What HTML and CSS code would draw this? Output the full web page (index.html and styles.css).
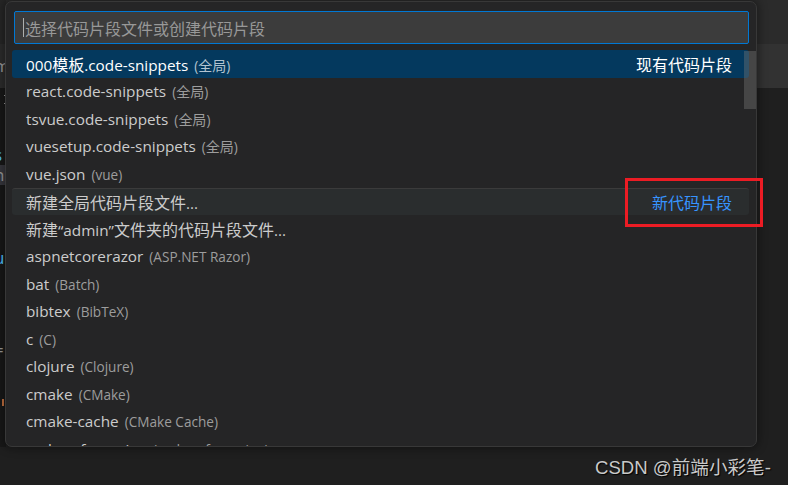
FILE: index.html
```html
<!DOCTYPE html>
<html lang="zh-CN">
<head>
<meta charset="utf-8">
<title>选择代码片段</title>
<link rel="stylesheet" href="styles.css">
</head>
<body>
<div class="workbench">
  <div class="main-area">
    <aside class="sidebar">
      <div class="sb-title"></div>
      <div class="sb-head"><span class="peek grey">m</span></div>
      <div class="sb-body">
        <div class="sb-line dots"><span class="dot"></span><span class="dot"></span></div>
        <div class="sb-line l-s"><span class="peek blue">s</span></div>
        <div class="sb-line l-n"><span class="peek grey">n</span></div>
        <div class="sb-line l-u"><span class="peek blue">u</span></div>
        <div class="sb-line l-eq"><span class="peek grey">=</span></div>
        <div class="sb-line l-or"><span class="orange-bar"></span></div>
      </div>
    </aside>
    <main class="editor">
      <div class="titlebar"></div>
      <div class="tabs"></div>
      <div class="editor-body"></div>
    </main>
  </div>
  <div class="bottom-area"></div>
</div>

<div class="quick-input">
  <div class="qi-header">
    <div class="qi-box"><span class="caret"></span><span class="placeholder">选择代码片段文件或创建代码片段</span></div>
  </div>
  <div class="qi-list">
    <div class="row selected"><span class="label">000<span class="zh">模板</span>.code-snippets<span class="desc">(<span class="zh">全局</span>)</span></span><span class="group zh">现有代码片段</span></div>
    <div class="row"><span class="label">react.code-snippets<span class="desc">(<span class="zh">全局</span>)</span></span></div>
    <div class="row"><span class="label">tsvue.code-snippets<span class="desc">(<span class="zh">全局</span>)</span></span></div>
    <div class="row"><span class="label">vuesetup.code-snippets<span class="desc">(<span class="zh">全局</span>)</span></span></div>
    <div class="row"><span class="label">vue.json<span class="desc">(vue)</span></span></div>
    <div class="row hover separator"><span class="label"><span class="zh">新建全局代码片段文件</span>...</span><span class="group new zh">新代码片段</span></div>
    <div class="row"><span class="label"><span class="zh">新建</span>“admin”<span class="zh">文件夹的代码片段文件</span>...</span></div>
    <div class="row"><span class="label">aspnetcorerazor<span class="desc">(ASP.NET Razor)</span></span></div>
    <div class="row"><span class="label">bat<span class="desc">(Batch)</span></span></div>
    <div class="row"><span class="label">bibtex<span class="desc">(BibTeX)</span></span></div>
    <div class="row"><span class="label">c<span class="desc">(C)</span></span></div>
    <div class="row"><span class="label">clojure<span class="desc">(Clojure)</span></span></div>
    <div class="row"><span class="label">cmake<span class="desc">(CMake)</span></span></div>
    <div class="row"><span class="label">cmake-cache<span class="desc">(CMake Cache)</span></span></div>
    <div class="row"><span class="label">code-referencing<span class="desc">(code-referencing)</span></span></div>
  </div>
  <div class="scrollbar"></div>
</div>

<div class="annotation"></div>
<div class="watermark">CSDN @前端小彩笔-</div>
</body>
</html>
```

FILE: styles.css
```css
html, body {
  margin: 0;
  padding: 0;
}
body {
  width: 788px;
  height: 485px;
  overflow: hidden;
  background: #1f1f1f;
  font-family: "Open Sans", "Noto Sans CJK SC", sans-serif;
  position: relative;
}

/* background workbench */
.workbench {
  display: flex;
  flex-direction: column;
  height: 485px;
}
.main-area {
  height: 447px;
  display: flex;
}
.bottom-area {
  flex: 1;
  background: #1f1f1f;
}
.sidebar {
  width: 6px;
  overflow: hidden;
  display: flex;
  flex-direction: column;
  background: #181818;
}
.sb-title {
  height: 44px;
  background: #262626;
}
.sb-head {
  height: 44px;
  background: #2c2c2c;
  display: flex;
  align-items: center;
  font-size: 17px;
}
.sb-body {
  flex: 1;
  font-size: 17px;
}
.sb-line {
  height: 20px;
  display: flex;
  align-items: center;
}
.peek {
  margin-left: -6px;
  line-height: 20px;
}
.grey { color: #9a9a9a; }
.blue { color: #4fc1ff; }
.dots {
  flex-direction: column;
  align-items: flex-start;
  justify-content: center;
  gap: 7px;
  height: 22px;
  padding-left: 4px;
}
.dot {
  width: 1px;
  height: 1px;
  background: #9a9a9a;
}
.l-s { margin-top: 35px; }
.l-n { background: #37373d; }
.l-u { margin-top: 63px; }
.l-eq { margin-top: 72px; }
.l-or { margin-top: 32px; }
.orange-bar {
  width: 2px;
  height: 7px;
  margin-left: 2px;
  background: #c3703f;
}
.editor {
  flex: 1;
  display: flex;
  flex-direction: column;
}
.titlebar {
  height: 44px;
  background: #2b2b2b;
}
.tabs {
  height: 44px;
  background: #323232;
}
.editor-body {
  flex: 1;
  background: #1f1f1f;
}

/* quick input widget (overlay) */
.quick-input {
  position: absolute;
  left: 5px;
  top: 1px;
  width: 752px;
  height: 446px;
  box-sizing: border-box;
  background: #252526;
  border: 1px solid #383838;
  border-radius: 7px;
  box-shadow: 0 0 8px 2px rgba(0, 0, 0, 0.36);
  overflow: hidden;
  color: #cccccc;
  font-size: 15.3px;
}
.qi-header {
  padding: 9px 7px 0 8px;
}
.qi-box {
  height: 33px;
  box-sizing: border-box;
  border: 1px solid #0078d4;
  border-radius: 2px;
  background: #3c3c3c;
  display: flex;
  align-items: center;
  padding-left: 8px;
}
.caret {
  width: 1px;
  height: 19px;
  background: #aeafad;
  margin-right: 1px;
}
.placeholder {
  font-family: "Noto Sans CJK SC", sans-serif;
  font-size: 16px;
  color: #989898;
}
.qi-list {
  padding: 6px 7px 0 6px;
}
.row {
  height: 27.5px;
  box-sizing: border-box;
  display: flex;
  align-items: center;
  padding: 0 17px 0 14px;
  border-radius: 3px;
  white-space: nowrap;
}
.label {
  flex: 1;
}
.zh {
  font-family: "Noto Sans CJK SC", sans-serif;
  font-size: 16px;
}
.desc {
  margin-left: 6px;
  color: #9d9d9d;
  font-size: 13.6px;
}
.desc .zh {
  font-size: 14px;
}
.row.selected {
  background: #04395e;
  color: #ffffff;
}
.row.selected .desc {
  color: #b3c4d1;
}
.row.hover {
  background: #2a2d2e;
}
.row.separator {
  border-top: 1px solid #3b3b3b;
}
.group {
  color: #ffffff;
}
.group.new {
  color: #3794ff;
}
.scrollbar {
  position: absolute;
  right: 0;
  top: 49px;
  width: 12px;
  height: 58px;
  background: rgba(121, 121, 121, 0.4);
}

/* red annotation rectangle */
.annotation {
  position: absolute;
  left: 625px;
  top: 178px;
  width: 138px;
  height: 49px;
  box-sizing: border-box;
  border: 3px solid #ec1c24;
}

.watermark {
  position: absolute;
  left: 595px;
  top: 452px;
  font-family: "Liberation Sans", "Noto Sans CJK SC", sans-serif;
  font-size: 18.6px;
  color: #c9c9c9;
  text-shadow: 1px 1px 1px #000000;
  white-space: nowrap;
}
```
